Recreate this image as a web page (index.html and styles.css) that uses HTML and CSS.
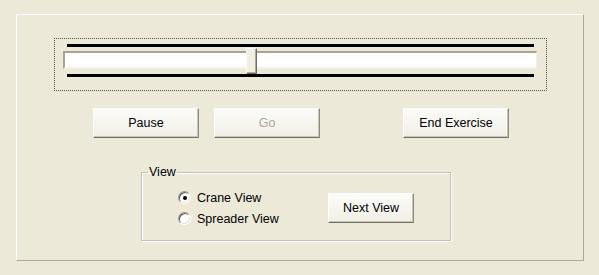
FILE: index.html
```html
<!DOCTYPE html>
<html lang="en">
<head>
    <meta charset="UTF-8">
    <title>Exercise Control</title>
    <link rel="stylesheet" href="styles.css">
</head>
<body>
    <div class="panel">
        <div class="slider">
            <div class="ticks"></div>
            <div class="track">
                <div class="thumb"></div>
            </div>
            <div class="ticks"></div>
        </div>

        <div class="actions">
            <button class="btn">Pause</button>
            <button class="btn btn-go" disabled>Go</button>
            <button class="btn btn-end">End Exercise</button>
        </div>

        <fieldset class="group">
            <legend>View</legend>
            <div class="group-body">
                <div class="options">
                    <label class="option"><span class="radio checked"></span>Crane View</label>
                    <label class="option"><span class="radio"></span>Spreader View</label>
                </div>
                <button class="btn btn-next">Next View</button>
            </div>
        </fieldset>
    </div>
</body>
</html>
```

FILE: styles.css
```css
body {
    margin: 0;
    background: #ece9d8;
    font-family: "Liberation Sans", Arial, sans-serif;
    font-size: 12.5px;
    color: #000;
}
.panel {
    box-sizing: border-box;
    width: 568px;
    height: 247px;
    margin: 14px 0 0 16px;
    border: 1px solid;
    border-color: #fff #aca899 #aca899 #fff;
}

/* trackbar */
.slider {
    box-sizing: border-box;
    width: 493px;
    margin: 23px 0 0 37px;
    padding: 5px 0 13px;
    border: 1px dotted #555;
}
.ticks {
    height: 3px;
    width: 467px;
    margin-left: 12px;
    background: #000;
}
.track {
    position: relative;
    box-sizing: border-box;
    width: 474px;
    height: 18px;
    margin: 4px 0 5px 8px;
    background: #fff;
    border-top: 2px solid #a7a495;
    border-left: 2px solid #a7a495;
    border-bottom: 2px solid #f3f2ea;
    border-right: 1px solid #f3f2ea;
}
.thumb {
    position: absolute;
    left: 181px;
    top: -5px;
    box-sizing: border-box;
    width: 11px;
    height: 26px;
    background: #f1efe4;
    border: 1px solid;
    border-color: #fff #716f64 #716f64 #fff;
    box-shadow: inset -1px -1px 0 #aca899;
}

/* buttons */
.actions {
    display: flex;
    margin: 17px 0 0 76px;
}
.btn {
    box-sizing: border-box;
    width: 106px;
    height: 30px;
    padding: 0;
    font: inherit;
    color: #000;
    background: linear-gradient(#fbfbf8, #f1efe6);
    border: 1px solid;
    border-color: #fff #8e8b7e #716f64 #fff;
    box-shadow: inset -1px -1px 0 #c9c6b8;
}
.btn-go {
    margin-left: 15px;
    color: #aca899;
}
.btn-end {
    margin-left: 83px;
}
.btn-next {
    width: 86px;
    margin-left: auto;
}

/* view group */
.group {
    box-sizing: border-box;
    width: 310px;
    margin: 27px 0 0 124px;
    padding: 0;
    border: 1px solid #c4c1b3;
    box-shadow: 1px 1px 0 #fff, inset 1px 1px 0 #fff;
}
.group legend {
    margin-left: 6px;
    padding: 0 1px;
    line-height: 14px;
}
.group-body {
    display: flex;
    align-items: center;
    padding: 8px 36px 11px;
}
.options {
    display: flex;
    flex-direction: column;
}
.option {
    display: flex;
    align-items: center;
    height: 21px;
}
.radio {
    position: relative;
    box-sizing: border-box;
    width: 13px;
    height: 13px;
    margin-right: 6px;
    border-radius: 50%;
    background: #fff;
    border: 1px solid;
    border-color: #9d9a8c #fff #fff #9d9a8c;
    box-shadow: inset 1px 1px 0 #555, inset -1px -1px 0 #e2e0d4;
}
.radio.checked::after {
    content: "";
    position: absolute;
    left: 3.5px;
    top: 3.5px;
    width: 4px;
    height: 4px;
    border-radius: 50%;
    background: #000;
}
```
